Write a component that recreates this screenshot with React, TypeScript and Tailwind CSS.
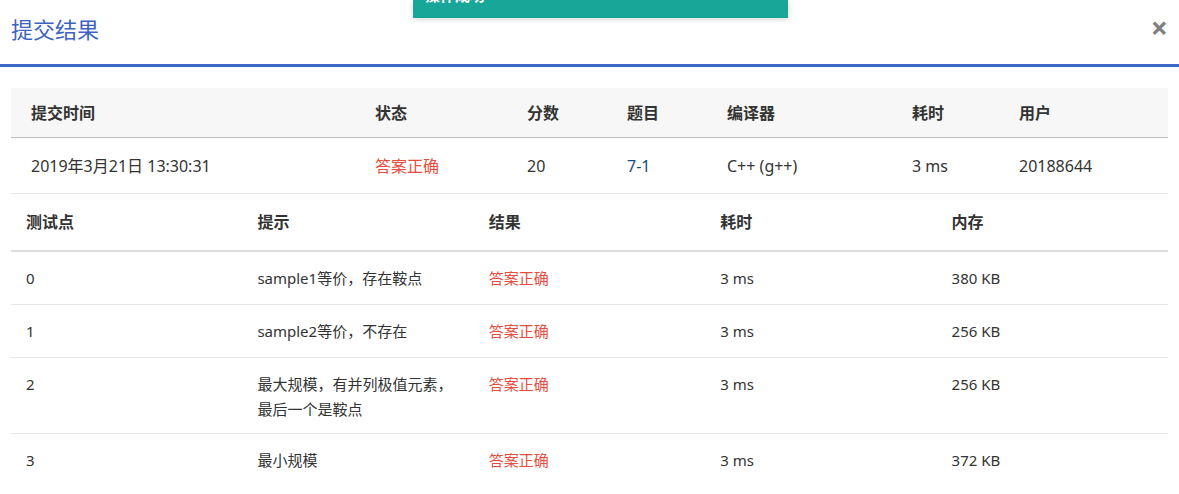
import React from 'react';

const font = { fontFamily: '"Noto Sans", "Noto Sans CJK SC", sans-serif' };

const summary = {
  time: '2019年3月21日 13:30:31',
  status: '答案正确',
  score: '20',
  problem: '7-1',
  compiler: 'C++ (g++)',
  cost: '3 ms',
  user: '20188644',
};

const cases = [
  { id: '0', hint: 'sample1等价，存在鞍点', result: '答案正确', time: '3 ms', mem: '380 KB' },
  { id: '1', hint: 'sample2等价，不存在', result: '答案正确', time: '3 ms', mem: '256 KB' },
  { id: '2', hint: '最大规模，有并列极值元素，最后一个是鞍点', result: '答案正确', time: '3 ms', mem: '256 KB' },
  { id: '3', hint: '最小规模', result: '答案正确', time: '3 ms', mem: '372 KB' },
];

const summaryCols = 'grid grid-cols-[344px_152px_100px_100px_185px_107px_170px]';

export default function App() {
  return (
    <div className="relative w-[1179px] h-[494px] overflow-hidden bg-white text-[#333]" style={font}>
      {/* toast, mostly scrolled off the top */}
      <div className="absolute left-[413px] top-0 w-[375px] h-[18px] bg-[#17a697] shadow-[0_1px_6px_rgba(0,0,0,0.18)] overflow-hidden">
        <span className="absolute left-[12px] top-[-15px] text-[15px] leading-[20px] font-bold text-white">操作成功</span>
      </div>

      {/* modal header */}
      <div className="flex items-center justify-between h-[67px] pl-[11px] pr-[11px] border-b-[3px] border-[#3d66c8]">
        <h2 className="text-[22px] leading-[30px] text-[#3c63c2] -mt-[6px]">提交结果</h2>
        <span className="text-[30px] leading-none font-bold text-[#808080] -mt-[9px]">×</span>
      </div>

      <div className="px-[11px] pt-[21px]">
        {/* submission summary */}
        <div className={`${summaryCols} h-[50px] items-center bg-[#f7f7f7] border-b border-[#bdbdbd] text-[16px] font-bold`}>
          <div className="pl-[20px]">提交时间</div>
          <div className="pl-[20px]">状态</div>
          <div className="pl-[20px]">分数</div>
          <div className="pl-[20px]">题目</div>
          <div className="pl-[20px]">编译器</div>
          <div className="pl-[20px]">耗时</div>
          <div className="pl-[20px]">用户</div>
        </div>
        <div className={`${summaryCols} h-[56px] items-center border-b border-[#e6e6e6] text-[16px]`}>
          <div className="pl-[20px]">{summary.time}</div>
          <div className="pl-[20px] text-[#e74c3c]">{summary.status}</div>
          <div className="pl-[20px]">{summary.score}</div>
          <div className="pl-[20px] text-[#1b4a78]">{summary.problem}</div>
          <div className="pl-[20px]">{summary.compiler}</div>
          <div className="pl-[20px]">{summary.cost}</div>
          <div className="pl-[20px]">{summary.user}</div>
        </div>

        {/* test cases */}
        <div className="grid grid-cols-5 h-[58px] items-center border-b-2 border-[#dddddd] text-[16px] font-bold">
          <div className="pl-[15px]">测试点</div>
          <div className="pl-[15px]">提示</div>
          <div className="pl-[15px]">结果</div>
          <div className="pl-[15px]">耗时</div>
          <div className="pl-[15px]">内存</div>
        </div>
        {cases.map((c, i) => (
          <div
            key={c.id}
            className={`grid grid-cols-5 text-[15px] leading-[25px] ${i < cases.length - 1 ? 'border-b border-[#e6e6e6]' : ''}`}
          >
            <div className="px-[15px] pt-[14px] pb-[13px]">{c.id}</div>
            <div className="px-[15px] pt-[14px] pb-[11px]">{c.hint}</div>
            <div className="px-[15px] pt-[14px] pb-[13px] text-[#e74c3c]">{c.result}</div>
            <div className="px-[15px] pt-[14px] pb-[13px]">{c.time}</div>
            <div className="px-[15px] pt-[14px] pb-[13px]">{c.mem}</div>
          </div>
        ))}
      </div>
    </div>
  );
}
